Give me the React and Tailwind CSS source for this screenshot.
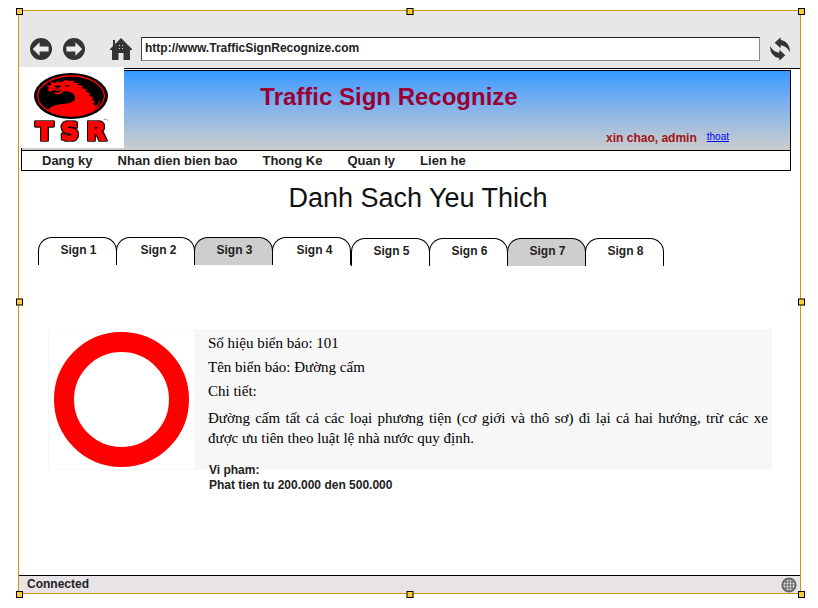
import React from "react";

const HANDLES = [
  "left-[-3px] top-[-3px]",
  "left-1/2 top-[-3px] -translate-x-1/2",
  "right-[-5px] top-[-3px]",
  "left-[-3px] top-1/2 -translate-y-1/2",
  "right-[-5px] top-1/2 -translate-y-1/2",
  "bottom-[-5px] left-[-3px]",
  "bottom-[-5px] left-1/2 -translate-x-1/2",
  "right-[-5px] bottom-[-5px]",
];

const TAB_GROUPS = [
  {
    className: "",
    tabs: [
      { label: "Sign 1", pad: "pl-[2px]" },
      { label: "Sign 2", pad: "pl-[6px]" },
      { label: "Sign 3", pad: "pl-[2px]", shaded: true },
      { label: "Sign 4", pad: "pl-[6px]" },
    ],
  },
  {
    className: "pt-px",
    tabs: [
      { label: "Sign 5", pad: "pl-[2px]" },
      { label: "Sign 6", pad: "pl-[2px]" },
      { label: "Sign 7", pad: "pl-[2px]", shaded: true },
      { label: "Sign 8", pad: "pl-[2px]" },
    ],
  },
];

function ArrowIcon({ flip }) {
  return (
    <svg viewBox="0 0 22 22" className={flip ? "size-[22px] -scale-x-100" : "size-[22px]"} aria-hidden="true">
      <circle cx="11" cy="11" r="11" fill="#333533" />
      <path d="M2.8 11 L9.6 4.2 V8.6 H18.6 V13.4 H9.6 V17.8 Z" fill="#ececec" />
    </svg>
  );
}

function HomeIcon() {
  return (
    <svg viewBox="0 0 22 22" className="size-[22px]" aria-hidden="true">
      <path d="M11 0 L15 4 L22 11 V12 H20 V22 H13.5 V15 H8.5 V22 H2 V12 H0 V11 L3 8 V2 H5 V6 Z" fill="#333533" />
      <path d="M9 7h1v1H9zM12 7h1v1h-1zM9 10h1v1H9zM12 10h1v1h-1z" fill="#e7e7e7" />
    </svg>
  );
}

function RefreshIcon() {
  return (
    <svg viewBox="0 0 60 72" className="h-6 w-5" aria-hidden="true">
      <path d="M14 17 L32 1 V8 Q60 14 60 46 Q50 27 32 25 V34 Z" fill="#333533" />
      <path d="M46 55 L28 71 V64 Q0 58 0 26 Q10 45 28 47 V38 Z" fill="#333533" />
    </svg>
  );
}

function GlobeIcon() {
  return (
    <svg viewBox="0 0 16 16" className="size-4" aria-hidden="true">
      <circle cx="8" cy="8" r="6.6" fill="#eeeeee" stroke="#666666" strokeWidth="2" />
      <g stroke="#666666" strokeWidth="1.2" fill="none">
        <path d="M8 1V15M1 8H15M2 5H14M2 11H14" />
        <path d="M5 2V14M11 2V14" />
      </g>
    </svg>
  );
}

function Logo() {
  return (
    <svg viewBox="-15 6 315 243" className="h-[81px] w-[105px]" role="img" aria-label="TSR">
      <ellipse cx="141" cy="93" rx="111" ry="69" fill="#000" />
      <ellipse cx="141" cy="93" rx="100" ry="60" fill="none" stroke="#f00" strokeWidth="4" />
      <path
        fill="#f00"
        d="M70 76 L76 68 L68 62 L82 60 L78 51 L94 54 L108 46 L104 53 L122 49 L119 44 L136 47 L152 48 L146 53 L166 54 L159 59 L178 64 L172 69 L190 74 L184 79 L201 87 L194 91 L210 100 L202 102 L214 112 L206 115 L216 124 Q225 114 229 102 Q228 122 206 137 Q180 154 141 154 Q102 154 72 135 Q84 121 108 118 Q142 116 151 106 Q158 95 146 85 Q135 77 119 79 L110 86 Q98 91 88 83 L105 82 L115 75 L98 78 L88 75 L80 80 Z"
      />
      <path
        d="M89 64 L103 61 L113 65 L101 69 Z M122 60 L138 62 L130 66 Z M88 71 L111 71 L98 74 Z"
        fill="#000"
      />
      <path d="M239 164 L246 162 L252 167" fill="none" stroke="#777" strokeWidth="2" />
      <text
        x="36 111 188"
        y="224"
        fill="#f00"
        stroke="#f00"
        strokeWidth="6"
        className="font-['DejaVu_Sans',sans-serif] text-[74px] font-bold [filter:drop-shadow(2px_0_0_#000)_drop-shadow(-2px_0_0_#000)_drop-shadow(0_2px_0_#000)_drop-shadow(0_-2px_0_#000)]"
      >
        TSR
      </text>
    </svg>
  );
}

export default function App() {
  return (
    <div className="flex min-h-screen flex-col bg-white pt-[10px] pr-[17px] pb-[14px] pl-[18px] font-['Liberation_Sans',Arial,sans-serif] text-xs text-[#222]">
      <div className="relative flex flex-1 flex-col border border-[#cc9900] bg-white">
        <div className="flex items-center border-b border-black bg-[#e7e7e7] pt-[26px] pr-[10px] pb-[7px] pl-[11px]">
          <button type="button" aria-label="Back" className="mr-[11px]">
            <ArrowIcon />
          </button>
          <button type="button" aria-label="Forward" className="mr-[25px]">
            <ArrowIcon flip />
          </button>
          <button type="button" aria-label="Home" className="mr-[9px]">
            <HomeIcon />
          </button>
          <input
            type="text"
            aria-label="Address"
            defaultValue="http://www.TrafficSignRecognize.com"
            className="h-6 min-w-0 flex-1 border border-t-[#222] border-r-[#888] border-b-[#888] border-l-[#444] bg-white pb-[2px] pl-[3px] font-bold outline-none"
          />
          <button type="button" aria-label="Refresh" className="ml-[10px]">
            <RefreshIcon />
          </button>
        </div>

        <header className="relative mt-px mr-[9px] ml-[2px] border border-b-0 border-black bg-linear-to-b from-[#3399ff] to-[#cccccc] pt-3 pb-1">
          <div className="absolute top-[-4px] left-[-3px] bg-white">
            <Logo />
          </div>
          <h1 className="pr-[34px] text-center text-2xl leading-7 font-bold text-[#990033]">Traffic Sign Recognize</h1>
          <div className="flex items-end justify-end gap-[10px] pt-[17px] pr-[61px]">
            <span className="pt-[2px] leading-4 font-bold text-[#a01414]">xin chao, admin</span>
            <a href="#thoat" className="pb-[2px] text-[10px] leading-[14px] text-[#0000ff] underline">
              thoat
            </a>
          </div>
        </header>

        <nav className="mr-[9px] ml-[2px] flex gap-[25px] border border-black bg-white pl-5 text-[13px] leading-[19px] font-bold">
          <a href="#dang-ky">Dang ky</a>
          <a href="#nhan-dien">Nhan dien bien bao</a>
          <a href="#thong-ke">Thong Ke</a>
          <a href="#quan-ly">Quan ly</a>
          <a href="#lien-he">Lien he</a>
        </nav>

        <main className="flex-1 pt-[11px] pb-6">
          <h2 className="pl-[17px] text-center text-[27px] leading-8 text-[#111]">Danh Sach Yeu Thich</h2>

          <div className="mt-[23px] flex items-start pl-[19px]">
            {TAB_GROUPS.map((group, i) => (
              <div key={i} className={`flex ${group.className}`}>
                {group.tabs.map((tab, j) => (
                  <button
                    key={tab.label}
                    type="button"
                    className={`h-7 w-[79px] rounded-t-[14px] border border-b-0 border-black pb-1 font-bold ${tab.pad} ${
                      tab.shaded ? "bg-[#cecece]" : "bg-transparent"
                    } ${j > 0 ? "-ml-px" : ""}`}
                  >
                    {tab.label}
                  </button>
                ))}
              </div>
            ))}
          </div>

          <section className="mt-[63px] mr-7 ml-[29px]">
            <div className="flex border border-[#f7f7f7] bg-[#f7f7f7]">
              <div className="flex w-[145px] shrink-0 items-center justify-center bg-white">
                <div className="size-[135px] rounded-full border-[20px] border-[#ff0000]" />
              </div>
              <div className="flex-1 pt-px pr-[3px] pb-[21px] pl-[14px] font-['Liberation_Serif','Times_New_Roman',serif] text-[15px] leading-6 text-black">
                <p>Số hiệu biển báo: 101</p>
                <p>Tên biển báo: Đường cấm</p>
                <p>Chi tiết:</p>
                <p className="mt-[5px] text-justify leading-5">
                  Đường cấm tất cả các loại phương tiện (cơ giới và thô sơ) đi lại cả hai hướng, trừ các xe được ưu tiên
                  theo luật lệ nhà nước quy định.
                </p>
              </div>
            </div>
            <div className="-mt-[7px] pl-[161px] leading-[15px] font-bold">
              <p>Vi pham:</p>
              <p>Phat tien tu 200.000 den 500.000</p>
            </div>
          </section>
        </main>

        <footer className="flex items-center justify-between border-t border-black bg-[#e7e3e7] pr-[3px] pl-2 leading-[17px] font-bold">
          <span>Connected</span>
          <GlobeIcon />
        </footer>

        {HANDLES.map((pos) => (
          <span key={pos} className={`absolute size-[7px] border border-black bg-[#ffcc33] ${pos}`} />
        ))}
      </div>
    </div>
  );
}
